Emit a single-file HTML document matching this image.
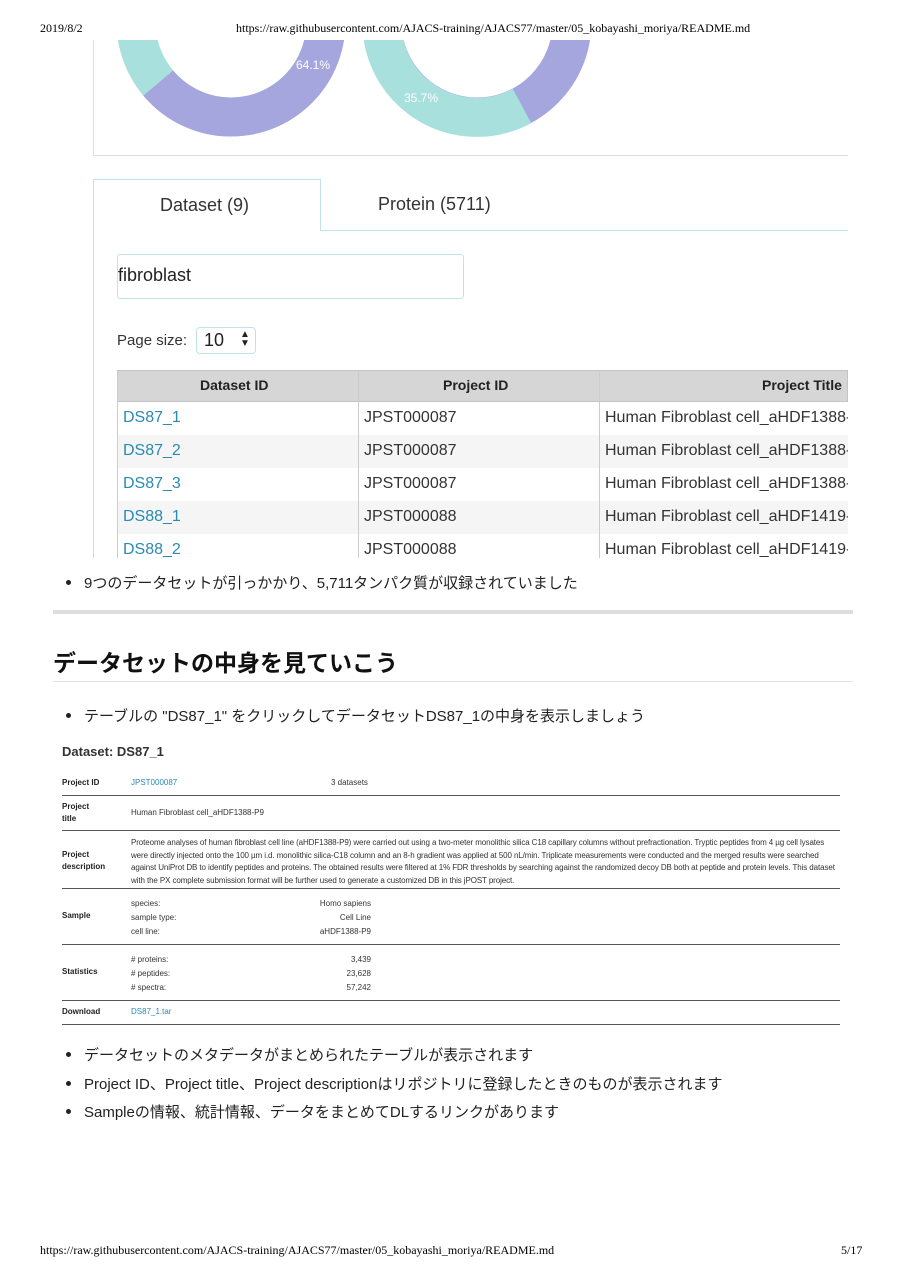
<!DOCTYPE html>
<html><head><meta charset="utf-8"><style>
*{margin:0;padding:0;box-sizing:border-box}
body{width:905px;height:1280px;background:#fff;position:relative;overflow:hidden;font-family:"Liberation Sans","Noto Sans CJK JP",sans-serif;color:#222}
.t{position:absolute;white-space:nowrap}
.serif{font-family:"Liberation Serif","Noto Serif CJK SC",serif;font-size:12px;color:#000}
.l{position:absolute;background:#ddd}
.dot{position:absolute;width:5px;height:5px;border-radius:50%;background:#222}
.s{font-size:8px;color:#333}
.sb{font-size:8px;font-weight:bold;color:#222}
.a{color:#2a8ab0}
</style></head><body>
<div class="t serif" style="left:40px;top:21px">2019/8/2</div>
<div class="t serif" style="left:236px;top:21px">https://raw.githubusercontent.com/AJACS-training/AJACS77/master/05_kobayashi_moriya/README.md</div>

<svg style="position:absolute;left:0;top:40px" width="905" height="120" viewBox="0 40 905 120">
<circle cx="231" cy="22" r="95" fill="none" stroke="#a8e0de" stroke-width="39"/>
<path d="M158.2 83.1 A95 95 0 1 0 229.3 -73" fill="none" stroke="#a6a6de" stroke-width="39"/>
<circle cx="477" cy="22" r="95" fill="none" stroke="#a6a6de" stroke-width="39"/>
<path d="M522 106 A95 95 0 0 1 384.6 -0.2" fill="none" stroke="#a8e0de" stroke-width="39"/>
<text x="296" y="69" fill="#fff" font-size="12" font-family="Liberation Sans">64.1%</text>
<text x="404" y="102" fill="#fff" font-size="12" font-family="Liberation Sans">35.7%</text>
</svg>
<div class="l" style="left:93px;top:40px;width:1px;height:116px"></div>
<div class="l" style="left:93px;top:155px;width:755px;height:1px"></div>

<div style="position:absolute;left:93px;top:179px;width:228px;height:52px;border:1px solid #bfe3ea;border-bottom:none;background:#fff"></div>
<div style="position:absolute;left:320px;top:230px;width:528px;height:1px;background:#bfe3ea"></div>
<div style="position:absolute;left:93px;top:230px;width:1px;height:328px;background:#bfe3ea"></div>
<div class="t" style="left:160px;top:195px;font-size:18px;color:#333">Dataset (9)</div>
<div class="t" style="left:378px;top:194px;font-size:18px;color:#333">Protein (5711)</div>

<div style="position:absolute;left:117px;top:254px;width:347px;height:45px;border:1px solid #bfe3ea;border-radius:3px"></div>
<div class="t" style="left:118px;top:265px;font-size:18px;color:#222">fibroblast</div>
<div class="t" style="left:117px;top:332px;font-size:15px;color:#333">Page size:</div>
<div style="position:absolute;left:196px;top:327px;width:60px;height:27px;border:1px solid #bfe3ea;border-radius:4px"></div>
<div class="t" style="left:204px;top:330px;font-size:18px;color:#222">10</div>
<div class="t" style="left:240px;top:330px;font-size:10px;line-height:9px;color:#222">▲<br>▼</div>

<div style="position:absolute;left:117px;top:370px;width:731px;height:188px;overflow:hidden;font-size:16px;color:#333">
<div style="position:absolute;left:0;top:0;width:731px;height:32px;background:#d6d6d6;border:1px solid #c4c4c4"></div>
<div style="position:absolute;left:0;top:65px;width:731px;height:33px;background:#f5f5f5"></div>
<div style="position:absolute;left:0;top:131px;width:731px;height:33px;background:#f5f5f5"></div>
<div style="position:absolute;left:241px;top:0;width:1px;height:200px;background:#ccc"></div>
<div style="position:absolute;left:482px;top:0;width:1px;height:200px;background:#ccc"></div>
<div style="position:absolute;left:0;top:0;width:1px;height:200px;background:#ccc"></div>
<div class="t" style="left:83px;top:7px;font-size:14px;font-weight:bold;color:#222">Dataset ID</div>
<div class="t" style="left:326px;top:7px;font-size:14px;font-weight:bold;color:#222">Project ID</div>
<div class="t" style="left:645px;top:7px;font-size:14px;font-weight:bold;color:#222">Project Title</div>
<div class="t a" style="left:6px;top:39px">DS87_1</div><div class="t" style="left:247px;top:39px">JPST000087</div><div class="t" style="left:488px;top:39px">Human Fibroblast cell_aHDF1388-</div>
<div class="t a" style="left:6px;top:72px">DS87_2</div><div class="t" style="left:247px;top:72px">JPST000087</div><div class="t" style="left:488px;top:72px">Human Fibroblast cell_aHDF1388-</div>
<div class="t a" style="left:6px;top:105px">DS87_3</div><div class="t" style="left:247px;top:105px">JPST000087</div><div class="t" style="left:488px;top:105px">Human Fibroblast cell_aHDF1388-</div>
<div class="t a" style="left:6px;top:138px">DS88_1</div><div class="t" style="left:247px;top:138px">JPST000088</div><div class="t" style="left:488px;top:138px">Human Fibroblast cell_aHDF1419-</div>
<div class="t a" style="left:6px;top:171px">DS88_2</div><div class="t" style="left:247px;top:171px">JPST000088</div><div class="t" style="left:488px;top:171px">Human Fibroblast cell_aHDF1419-</div>
</div>

<div class="dot" style="left:66px;top:580px"></div>
<div class="t" style="left:84px;top:572px;font-size:15px">9つのデータセットが引っかかり、5,711タンパク質が収録されていました</div>
<div class="l" style="left:53px;top:610px;width:800px;height:4px;background:#ddd"></div>
<div class="t" style="left:53px;top:644px;font-size:23px;font-weight:bold;color:#111">データセットの中身を見ていこう</div>
<div class="l" style="left:53px;top:681px;width:800px;height:1px;background:#e4e4e4"></div>
<div class="dot" style="left:66px;top:713px"></div>
<div class="t" style="left:84px;top:705px;font-size:15px">テーブルの "DS87_1" をクリックしてデータセットDS87_1の中身を表示しましょう</div>

<div class="t" style="left:62px;top:744px;font-size:13px;font-weight:bold;color:#333">Dataset: DS87_1</div>
<div class="t sb" style="left:62px;top:778px">Project ID</div>
<div class="t s a" style="left:131px;top:778px">JPST000087</div>
<div class="t s" style="left:331px;top:778px">3 datasets</div>
<div class="l" style="left:62px;top:795px;width:778px;height:1px;background:#555"></div>
<div class="t sb" style="left:62px;top:801px;line-height:12px">Project<br>title</div>
<div class="t s" style="left:131px;top:808px">Human Fibroblast cell_aHDF1388-P9</div>
<div class="l" style="left:62px;top:830px;width:778px;height:1px;background:#555"></div>
<div class="t sb" style="left:62px;top:849px;line-height:12px">Project<br>description</div>
<div class="t s" style="left:131px;top:837px;line-height:12.5px;white-space:normal;width:712px;letter-spacing:-0.1px">Proteome analyses of human fibroblast cell line (aHDF1388-P9) were carried out using a two-meter monolithic silica C18 capillary columns without prefractionation. Tryptic peptides from 4 µg cell lysates were directly injected onto the 100 µm i.d. monolithic silica-C18 column and an 8-h gradient was applied at 500 nL/min. Triplicate measurements were conducted and the merged results were searched against UniProt DB to identify peptides and proteins. The obtained results were filtered at 1% FDR thresholds by searching against the randomized decoy DB both at peptide and protein levels. This dataset with the PX complete submission format will be further used to generate a customized DB in this jPOST project.</div>
<div class="l" style="left:62px;top:888px;width:778px;height:1px;background:#555"></div>
<div class="t sb" style="left:62px;top:911px">Sample</div>
<div class="t s" style="left:131px;top:897px;line-height:14px">species:<br>sample type:<br>cell line:</div>
<div class="t s" style="left:271px;top:897px;line-height:14px;text-align:right;width:100px">Homo sapiens<br>Cell Line<br>aHDF1388-P9</div>
<div class="l" style="left:62px;top:944px;width:778px;height:1px;background:#555"></div>
<div class="t sb" style="left:62px;top:967px">Statistics</div>
<div class="t s" style="left:131px;top:953px;line-height:14px"># proteins:<br># peptides:<br># spectra:</div>
<div class="t s" style="left:271px;top:953px;line-height:14px;text-align:right;width:100px">3,439<br>23,628<br>57,242</div>
<div class="l" style="left:62px;top:1000px;width:778px;height:1px;background:#555"></div>
<div class="t sb" style="left:62px;top:1007px">Download</div>
<div class="t s a" style="left:131px;top:1007px">DS87_1.tar</div>
<div class="l" style="left:62px;top:1024px;width:778px;height:1px;background:#555"></div>

<div class="dot" style="left:66px;top:1052px"></div>
<div class="t" style="left:84px;top:1044px;font-size:15px">データセットのメタデータがまとめられたテーブルが表示されます</div>
<div class="dot" style="left:66px;top:1081px"></div>
<div class="t" style="left:84px;top:1073px;font-size:15px">Project ID、Project title、Project descriptionはリポジトリに登録したときのものが表示されます</div>
<div class="dot" style="left:66px;top:1109px"></div>
<div class="t" style="left:84px;top:1101px;font-size:15px">Sampleの情報、統計情報、データをまとめてDLするリンクがあります</div>

<div class="t serif" style="left:40px;top:1243px">https://raw.githubusercontent.com/AJACS-training/AJACS77/master/05_kobayashi_moriya/README.md</div>
<div class="t serif" style="left:841px;top:1243px">5/17</div>
</body></html>
